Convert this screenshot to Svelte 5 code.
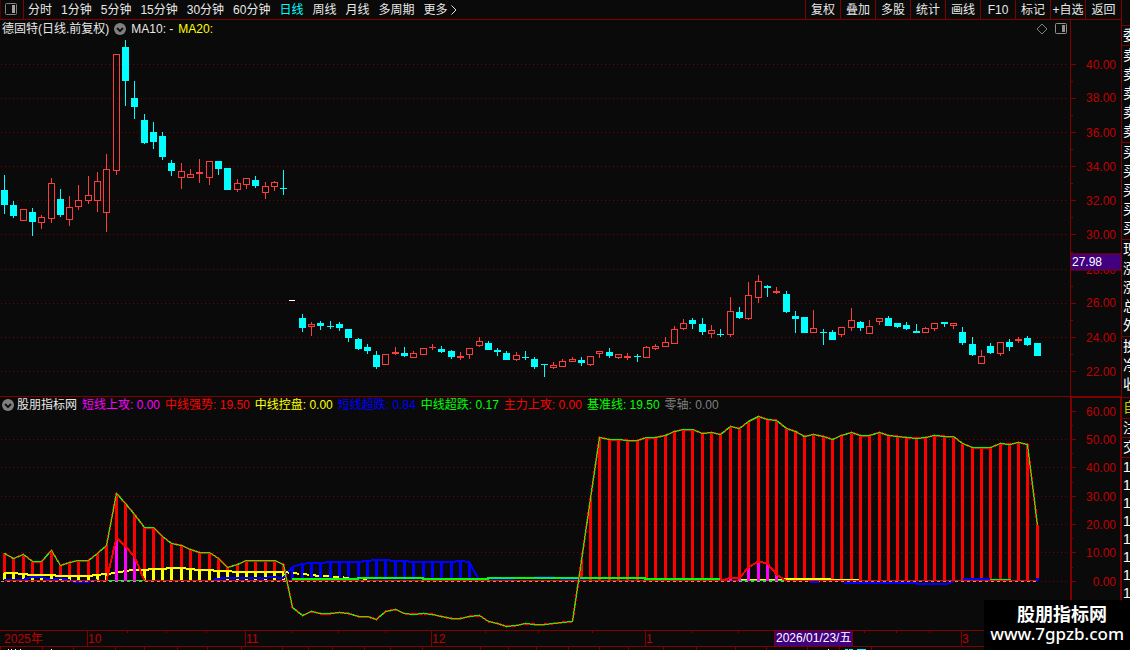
<script>
  const periods = ['分时', '1分钟', '5分钟', '15分钟', '30分钟', '60分钟', '日线', '周线', '月线', '多周期'];
  const tools = ['复权', '叠加', '多股', '统计', '画线', 'F10', '标记', '+自选', '返回'];

  let activePeriod = '日线';

  const legend = [
    { name: '短线上攻', value: '0.00', color: 'magenta' },
    { name: '中线强势', value: '19.50', color: 'red' },
    { name: '中线控盘', value: '0.00', color: 'yellow' },
    { name: '短线超跌', value: '0.84', color: 'blue' },
    { name: '中线超跌', value: '0.17', color: 'green' },
    { name: '主力上攻', value: '0.00', color: 'red' },
    { name: '基准线', value: '19.50', color: 'green' },
    { name: '零轴', value: '0.00', color: 'gray' }
  ];

  const sideGroups = [
    { rows: [], kind: 'blank' },
    { rows: ['委'], kind: 'single' },
    { rows: ['卖', '卖', '卖', '卖', '卖'], kind: 'five' },
    { rows: ['买', '买', '买', '买', '买'], kind: 'five' },
    { rows: ['现', '涨', '涨', '总', '外'], kind: 'five' },
    { rows: ['换', '净', '收'], kind: 'three' },
    { rows: ['自'], kind: 'own' },
    { rows: ['注'], kind: 'short' },
    { rows: ['交'], kind: 'single' },
    { rows: ['1', '1', '1', '1', '1', '1', '1', '1'], kind: 'ticks' }
  ];

  // price pane covers y 20..396, indicator pane 397..630
  const price = {
    top: 20,
    height: 376,
    major: [64, 98, 132, 166, 200, 234, 269, 303, 337, 371],
    minor: [81, 115, 149, 183, 217, 252, 286, 320, 354],
    labels: ['40.00', '38.00', '36.00', '34.00', '32.00', '30.00', '28.00', '26.00', '24.00', '22.00']
  };
  const study = {
    top: 397,
    height: 233,
    major: [411, 439, 467, 496, 524, 552, 581],
    minor: [425, 453, 482, 510, 538, 567],
    labels: ['60.00', '50.00', '40.00', '30.00', '20.00', '10.00', '0.00']
  };

  const xAt = (i) => Math.round(4 + i * 9.304);
  const pct = (y, pane) => ((y - pane.top + 0.5) / pane.height) * 100;

  // high, body top, body bottom, low, direction (d = down, u = up, n = no trade)
  const candles = `175 190 205 214 d|201 205 216 218 d|209 209 221 221 u|208 212 222 236 d|215 217 223 229 u
178 183 219 223 u|189 199 215 217 d|196 207 220 226 u|185 200 207 210 u|176 195 201 204 u
172 181 201 212 u|154 169 213 232 u|54 54 171 175 u|40 47 81 106 d|81 98 107 119 d
114 120 143 144 d|122 132 142 149 d|132 136 157 160 d|160 163 171 176 d|163 171 178 189 u
169 174 178 178 u|159 172 174 183 u|161 161 178 185 u|161 161 169 175 d|168 168 190 190 d
179 183 190 192 u|178 178 185 189 u|176 180 186 188 d|182 186 193 199 u|181 182 187 191 u
170 188 189 195 d|300 300 301 301 n|314 318 328 332 d|322 324 327 336 u|321 323 326 330 d
321 326 327 329 d|322 324 328 331 d|329 329 338 342 d|338 339 349 350 d|344 347 351 354 d
351 355 367 369 d|354 354 365 365 u|347 352 354 355 u|347 353 356 357 d|351 353 358 358 u
348 348 355 355 u|344 347 348 350 u|346 349 352 353 d|350 351 357 359 d|352 356 358 360 u
348 348 355 359 u|337 341 346 347 u|341 343 350 350 d|348 350 352 356 d|351 353 360 360 d
352 355 360 361 u|351 357 358 360 d|357 359 367 369 d|364 364 365 377 d|362 365 368 369 u
359 361 367 367 u|357 359 362 362 u|357 360 363 366 d|356 356 365 366 u|351 351 354 358 u
348 352 356 358 d|354 354 358 359 u|353 356 358 360 u|354 356 357 362 d|346 347 358 358 u
344 346 349 350 u|337 342 347 347 u|326 329 344 344 u|319 323 329 330 u|318 320 324 329 d
318 324 332 335 d|325 330 334 338 u|329 334 335 337 d|297 311 335 337 u|307 312 318 319 d
282 295 319 320 u|275 281 298 303 u|285 286 288 297 d|287 291 293 294 u|291 294 312 313 d
311 316 319 333 d|317 317 333 333 d|310 328 333 333 u|329 332 333 345 d|330 332 340 340 d
327 327 335 337 u|308 320 328 331 u|321 322 328 331 d|320 326 334 334 u|318 318 322 325 u
316 318 326 326 d|323 323 327 328 d|322 325 329 330 d|324 331 333 333 d|327 328 333 333 u
323 323 329 331 u|322 322 324 327 d|323 323 326 329 u|327 332 343 345 d|337 344 355 356 d
350 356 364 364 u|343 346 353 354 d|342 342 354 356 u|339 342 347 351 d|337 339 341 343 u
336 338 345 346 d|343 343 356 356 d`
    .split(/[|\n]/)
    .map((row, i) => {
      const [high, top, bottom, low, dir] = row.split(' ');
      return { x: xAt(i), high: +high, top: +top, bottom: +bottom, low: +low, dir };
    });

  const baseline = [
    553, 558, 554, 561, 561, 550, 565, 562, 560, 560, 553, 545, 493, 503, 514, 527, 527, 536, 543, 545,
    549, 552, 552, 558, 567, 564, 560, 560, 560, 560, 564, 607, 615, 611, 613, 613, 612, 613, 616, 616,
    619, 611, 609, 613, 614, 613, 614, 616, 618, 618, 616, 615, 621, 623, 626, 625, 623, 624, 624, 623,
    622, 621, 560, 498, 437, 439, 439, 440, 440, 437, 437, 435, 431, 429, 429, 433, 432, 434, 426, 428,
    421, 416, 419, 420, 428, 431, 436, 434, 436, 439, 435, 432, 435, 435, 432, 435, 436, 437, 438, 437,
    435, 436, 436, 443, 447, 447, 447, 443, 444, 442, 444, 525
  ];
  const control = [
    573, 573, 574, 575, 575, 575, 576, 576, 576, 576, 575, 574, 573, 571, 570, 570, 569, 569, 568, 568,
    569, 570, 570, 571, 571, 572, 572, 572, 572, 572, 572
  ];
  const oversold = [
    567, 564, 563, 563, 562, 562, 562, 562, 561, 560, 560, 561, 561, 562, 562, 562, 562, 562, 561, 562
  ];
  const attackBars = [
    [12, 539], [13, 547], [14, 557], [78, 578], [79, 578], [80, 567], [81, 562], [82, 564], [83, 574]
  ];

  const line = (values, start = 0) => values.map((y, i) => `${xAt(i + start)},${y}`).join(' ');
  const strong = baseline.map((y, i) => ({ x: xAt(i), y, i })).filter((b) => b.i < 31 || b.i > 61);

  const months = [
    { x: 0, text: '2025年' },
    { x: 87, text: '10' },
    { x: 245, text: '11' },
    { x: 431, text: '12' },
    { x: 645, text: '1' },
    { x: 961, text: '3' }
  ];
  const weekTicks = [127, 166, 206, 292, 338, 385, 485, 538, 592, 692, 738, 864, 896, 929];
  const stripTicks = [
    0, 42, 73, 115, 144, 177, 207, 241, 282, 308, 332, 364, 390, 422, 480, 508, 536, 568, 599, 628, 663,
    696, 735, 766, 807, 839, 871
  ];
</script>

<div class="terminal">
  <div class="main">
    <nav class="topbar">
      <button class="panel-toggle" aria-label="侧栏">
        <svg width="12" height="12" viewBox="0 0 12 12">
          <rect x="0.5" y="0.5" width="11" height="11" rx="1" fill="none" stroke="#808080" />
          <rect x="7" y="2" width="3" height="8" fill="#a0a0a0" />
        </svg>
      </button>
      <div class="periods">
        {#each periods as period}
          <button class:active={period === activePeriod} on:click={() => (activePeriod = period)}>{period}</button>
        {/each}
        <button class="more">更多
          <svg width="6" height="10" viewBox="0 0 6 10"><path d="M0.5 0.5 L5 5 L0.5 9.5" fill="none" stroke="#e0e0e0" /></svg>
        </button>
      </div>
      <div class="tools">
        {#each tools as tool}
          <button>{tool}</button>
        {/each}
      </div>
    </nav>

    <section class="pane price">
      <div class="plot">
        <svg class="canvas" viewBox="0 20 1070 376" preserveAspectRatio="none">
          {#each price.major as y}
            <line class="grid" x1="1" x2="1067" y1={y + 0.5} y2={y + 0.5} />
          {/each}
          {#each candles as c}
            {#if c.dir === 'n'}
              <rect class="flat" x={c.x - 3} y={c.top} width="6" height="1" />
            {:else if c.dir === 'd'}
              <rect class="down" x={c.x} y={c.high} width="1" height={c.low - c.high} />
              <rect class="down" x={c.x - 3} y={c.top} width="7" height={c.bottom - c.top} />
            {:else}
              <rect class="up" x={c.x} y={c.high} width="1" height={c.top - c.high} />
              <rect class="up" x={c.x} y={c.bottom} width="1" height={c.low - c.bottom} />
              {#if c.bottom - c.top < 3}
                <rect class="up" x={c.x - 3} y={c.top} width="7" height={c.bottom - c.top} />
              {:else}
                <rect class="hollow" x={c.x - 2.5} y={c.top + 0.5} width="6" height={c.bottom - c.top - 1} />
              {/if}
            {/if}
          {/each}
        </svg>
        <header class="caption">
          <span>德固特(日线.前复权)</span>
          <button class="fold" aria-label="指标菜单">
            <svg width="12" height="12" viewBox="0 0 12 12">
              <circle cx="6" cy="6" r="6" fill="#808080" />
              <path d="M3 5 L6 8 L9 5" fill="none" stroke="#141414" stroke-width="2" />
            </svg>
          </button>
          <span>MA10: -</span>
          <span class="yellow">MA20:</span>
          <span class="corner">
            <svg width="12" height="12" viewBox="0 0 12 12"><path d="M6 1 L11 6 L6 11 L1 6 Z" fill="none" stroke="#808080" /></svg>
            <svg width="12" height="12" viewBox="0 0 12 12">
              <rect x="0.5" y="0.5" width="11" height="10" rx="1" fill="none" stroke="#909090" />
              <rect x="7" y="2" width="3" height="7" fill="#909090" />
            </svg>
          </span>
        </header>
      </div>
      <div class="axis">
        <svg class="canvas" viewBox="0 20 50 376" preserveAspectRatio="none">
          {#each price.major as y}<rect class="tick" x="0" {y} width="5" height="1" />{/each}
          {#each price.minor as y}<rect class="tick" x="0" {y} width="2" height="1" />{/each}
        </svg>
        {#each price.labels as label, i}
          <span class="label" style="top: {pct(price.major[i], price)}%">{label}</span>
        {/each}
        <span class="marker" style="top: {pct(261, price)}%">27.98</span>
      </div>
    </section>

    <section class="pane study">
      <div class="plot">
        <svg class="canvas" viewBox="0 397 1070 233" preserveAspectRatio="none">
          {#each study.major.slice(1) as y}
            <line class="grid" x1="1" x2="1067" y1={y + 0.5} y2={y + 0.5} />
          {/each}

          {#each strong as bar}
            <rect fill="#f00" x={bar.x - 1} y={bar.y} width="3" height={580 - bar.y} />
          {/each}
          {#each control as y, i}
            <rect fill="#ff0" x={xAt(i) - 1} {y} width="3" height={580 - y} />
          {/each}
          {#each oversold as y, i}
            <rect fill="#00f" x={xAt(i + 31) - 1} {y} width="3" height={580 - y} />
          {/each}

          <g class="curves thick">
            <polyline stroke="#00f" points="4,580 23,580 32,577 41,577 51,580 60,578 69,580 74,582 88,582 97,580" />
            <polyline stroke="#00f" points="213,580 223,578 265,578 270,577 283,578 286,575 292,567" />
            <polyline stroke="#00f" points={`${line(oversold, 31)} 478,578`} />
            <polyline stroke="#00f" points="478,579 506,579 544,577 553,577 562,579 585,579" />
            <polyline stroke="#ff0" points={line(control)} />
            <polyline class="dashed" stroke="#ff0" points="283,572 302,574 320,576 339,577 358,579 367,580" />
            <polyline stroke="#0f0" points="292,579 358,579 358,578 423,578 423,579 488,579 488,578 645,578 645,579 720,579" />
            <polyline stroke="#ff0" points="784,579 831,579" />
          </g>

          <g class="curves" transform="translate(0.5 0.5)">
            <polyline stroke="#ff0" points="740,579 858,579" />
            <polyline stroke="#0f0" points="965,579 1010,579" />
            <polyline stroke="#f00" points="4,580 1037,580" />
            <polyline stroke="#0f0" points="106,580 144,580" />
            <polyline stroke="#0f0" points="740,580 784,580" />
            <polyline class="zero" points="0,581 1037,581" />
          </g>

          <g class="curves thick">
            <polyline stroke="#00f" points="810,582 819,582" />
            <polyline stroke="#00f" points="844,583 916,583 919,584 946,584 953,582" />
            <polyline stroke="#00f" points="963,579 972,579 990,579" />
          </g>

          {#each attackBars as [i, y]}
            <rect fill="#f0f" x={xAt(i) - 1} {y} width="3" height={581 - y} />
          {/each}
          <g class="curves" transform="translate(0.5 0.5)">
            <polyline class="thick" stroke="#f00" points="106,580 116,537 125,546 134,556 144,580" />
            <polyline class="thick" stroke="#f00" points="722,580 730,577 739,577 749,566 758,561 767,563 776,574 785,580" />
            <polyline class="thick" stroke="#f00" points={line(baseline)} />
            <polyline stroke="#0f0" points={line(baseline)} />
          </g>
          <rect fill="#00f" x="1036" y="578" width="3" height="3" />
        </svg>
        <header class="caption legend">
          <button class="fold" aria-label="指标菜单">
            <svg width="12" height="12" viewBox="0 0 12 12">
              <circle cx="6" cy="6" r="6" fill="#808080" />
              <path d="M3 5 L6 8 L9 5" fill="none" stroke="#141414" stroke-width="2" />
            </svg>
          </button>
          <span class="title">股朋指标网</span>
          {#each legend as item}
            <span class={item.color}>{item.name}: {item.value}</span>
          {/each}
        </header>
      </div>
      <div class="axis">
        <svg class="canvas" viewBox="0 397 48 233" preserveAspectRatio="none">
          {#each study.major as y}<rect class="tick" x="0" {y} width="4" height="1" />{/each}
          {#each study.minor as y}<rect class="tick" x="0" {y} width="1" height="1" />{/each}
        </svg>
        {#each study.labels as label, i}
          <span class="label" style="top: {pct(study.major[i], study)}%">{label}</span>
        {/each}
      </div>
    </section>

    <div class="dates">
      <svg class="canvas" viewBox="0 0 1121 15" preserveAspectRatio="none">
        {#each weekTicks as x}<rect class="tick" {x} y="0" width="1" height="2" />{/each}
      </svg>
      {#each months as month, i}
        <span class="month" class:year={i === 0} style="left: {(month.x / 1121) * 100}%">{month.text}</span>
      {/each}
      <span class="cursor-date" style="left: {(774 / 1121) * 100}%">2026/01/23/五</span>
    </div>

    <div class="strip">
      <svg class="canvas" viewBox="0 0 1121 3" preserveAspectRatio="none">
        {#each stripTicks as x}<rect class="tick" {x} y="0" width="1" height="3" />{/each}
        <path d="M8 2h1v1h-1z M11 2h1v1h-1z M15 2h1v1h-1z M20 2h1v1h-1z M51 2h1v1h-1z M828 2h1v1h-1z" fill="#fff" />
        <path d="M845 2h3v1h-3z M849 2h4v1h-4z M857 2h9v1h-9z" fill="#0ff" />
      </svg>
    </div>
  </div>

  <aside class="quotes">
    {#each sideGroups as group}
      <div class="group {group.kind}">
        {#each group.rows as row}
          <div>{row}</div>
        {/each}
      </div>
    {/each}
  </aside>

  <div class="watermark">
    <strong>股朋指标网</strong>
    <span>www.7gpzb.com</span>
  </div>
</div>

<style>
  :global(body) {
    margin: 0;
    background: #0a0a0a;
  }

  .terminal {
    position: relative;
    display: flex;
    height: 100vh;
    overflow: hidden;
    background: #0a0a0a;
    color: #e8e8e8;
    font-family: 'Liberation Sans', 'Noto Sans CJK SC', sans-serif;
    font-size: 12px;
    white-space: nowrap;
  }

  .main {
    flex: 1;
    min-width: 0;
    display: flex;
    flex-direction: column;
  }

  button {
    padding: 0;
    border: 0;
    background: none;
    color: inherit;
    font: inherit;
    line-height: 18px;
    cursor: pointer;
  }

  svg {
    display: block;
  }

  .topbar {
    display: flex;
    height: 19px;
    border-bottom: 1px solid #800000;
  }

  .panel-toggle {
    display: flex;
    align-items: center;
    width: 24px;
    padding: 0 0 2px 4px;
    box-sizing: border-box;
    border-left: 1px solid #500000;
    border-right: 1px solid #800000;
  }

  .periods {
    flex: 1;
    display: flex;
    gap: 9px;
    padding-left: 4px;
  }

  .periods .active {
    color: #00ffff;
  }

  .more {
    display: flex;
    align-items: center;
    gap: 3px;
  }

  .tools {
    display: flex;
  }

  .tools button {
    width: 35px;
    border-left: 1px solid #800000;
  }

  .tools button:last-child {
    width: 36px;
  }

  .pane {
    display: flex;
    min-height: 0;
  }

  .price {
    flex: 376 1 0;
    border-bottom: 1px solid #800000;
  }

  .study {
    flex: 233 1 0;
    border-bottom: 1px solid #800000;
  }

  .plot {
    position: relative;
    flex: 1;
    min-width: 0;
  }

  .axis {
    position: relative;
    width: 50px;
    border-left: 1px solid #800000;
  }

  .study .axis {
    width: 48px;
    border-left: 2px solid #800000;
    border-right: 1px solid #800000;
    box-shadow: inset 0 1px #800000;
  }

  .canvas {
    position: absolute;
    top: 0;
    left: 0;
    width: 100%;
    height: 100%;
    shape-rendering: crispEdges;
  }

  .grid {
    stroke: #780000;
    stroke-dasharray: 1 3;
  }

  .tick {
    fill: #800000;
  }

  .down {
    fill: #00ffff;
  }

  .up {
    fill: #ff3c3c;
  }

  .hollow {
    fill: none;
    stroke: #ff3c3c;
  }

  .flat {
    fill: #ffffff;
  }

  .curves {
    fill: none;
  }

  .thick {
    stroke-width: 2;
  }

  .dashed {
    stroke-dasharray: 6 4;
  }

  .zero {
    stroke: #a0a0a0;
    stroke-dasharray: 3 3;
  }

  .caption {
    position: absolute;
    top: 0;
    left: 0;
    right: 0;
    display: flex;
    align-items: center;
    gap: 5px;
    padding: 0 3px 0 2px;
    line-height: 18px;
  }

  .legend {
    line-height: 16px;
  }

  .legend .fold {
    margin-right: -2px;
  }

  .corner {
    display: flex;
    gap: 7px;
    margin-left: auto;
  }

  .magenta {
    color: #ff00ff;
  }

  .red {
    color: #ff0000;
  }

  .yellow {
    color: #ffff00;
  }

  .blue {
    color: #0000ff;
  }

  .green {
    color: #00ff00;
  }

  .gray {
    color: #808080;
  }

  .label {
    position: absolute;
    right: 5px;
    line-height: 14px;
    transform: translateY(-50%);
    color: #c00000;
  }

  .study .label {
    right: 4px;
  }

  .marker {
    position: absolute;
    left: 0;
    right: 0;
    padding-left: 1px;
    line-height: 15px;
    transform: translateY(-50%);
    border: 1px solid #800000;
    border-width: 1px 0;
    background: #400080;
    color: #ffffff;
  }

  .dates {
    position: relative;
    height: 15px;
    border-bottom: 1px solid #800000;
    line-height: 16px;
    color: #c00000;
  }

  .month {
    position: absolute;
    height: 15px;
    border-left: 1px solid #800000;
  }

  .month.year {
    padding-left: 4px;
    border-left: 0;
  }

  .cursor-date {
    position: absolute;
    height: 15px;
    padding: 0 1px;
    border: 1px solid #800000;
    border-width: 0 1px;
    background: #400080;
    color: #ffffff;
    line-height: 15px;
  }

  .strip {
    position: relative;
    height: 3px;
  }

  .quotes {
    width: 8px;
    overflow: hidden;
    border-left: 1px solid #800000;
    color: #ffffff;
    font-size: 14px;
    line-height: 19px;
  }

  .group {
    padding-left: 1px;
    border-bottom: 1px solid #800000;
  }

  .blank {
    height: 25px;
  }

  .five {
    padding-bottom: 1px;
  }

  .three {
    padding-bottom: 3px;
  }

  .own {
    padding-bottom: 1px;
    color: #c8c800;
  }

  .short {
    line-height: 18px;
  }

  .ticks {
    border-bottom: 0;
    line-height: 18px;
  }

  .watermark {
    position: absolute;
    right: 0;
    bottom: 0;
    display: flex;
    flex-direction: column;
    align-items: center;
    padding: 4px 6px 6px;
    background: #000000;
    color: #ffffff;
    font-family: 'Noto Sans', 'Noto Sans CJK SC', sans-serif;
    font-size: 18px;
    line-height: 20px;
  }

  .watermark strong {
    padding-left: 10px;
  }

  .watermark span {
    font-size: 17px;
    font-weight: 500;
  }
</style>
